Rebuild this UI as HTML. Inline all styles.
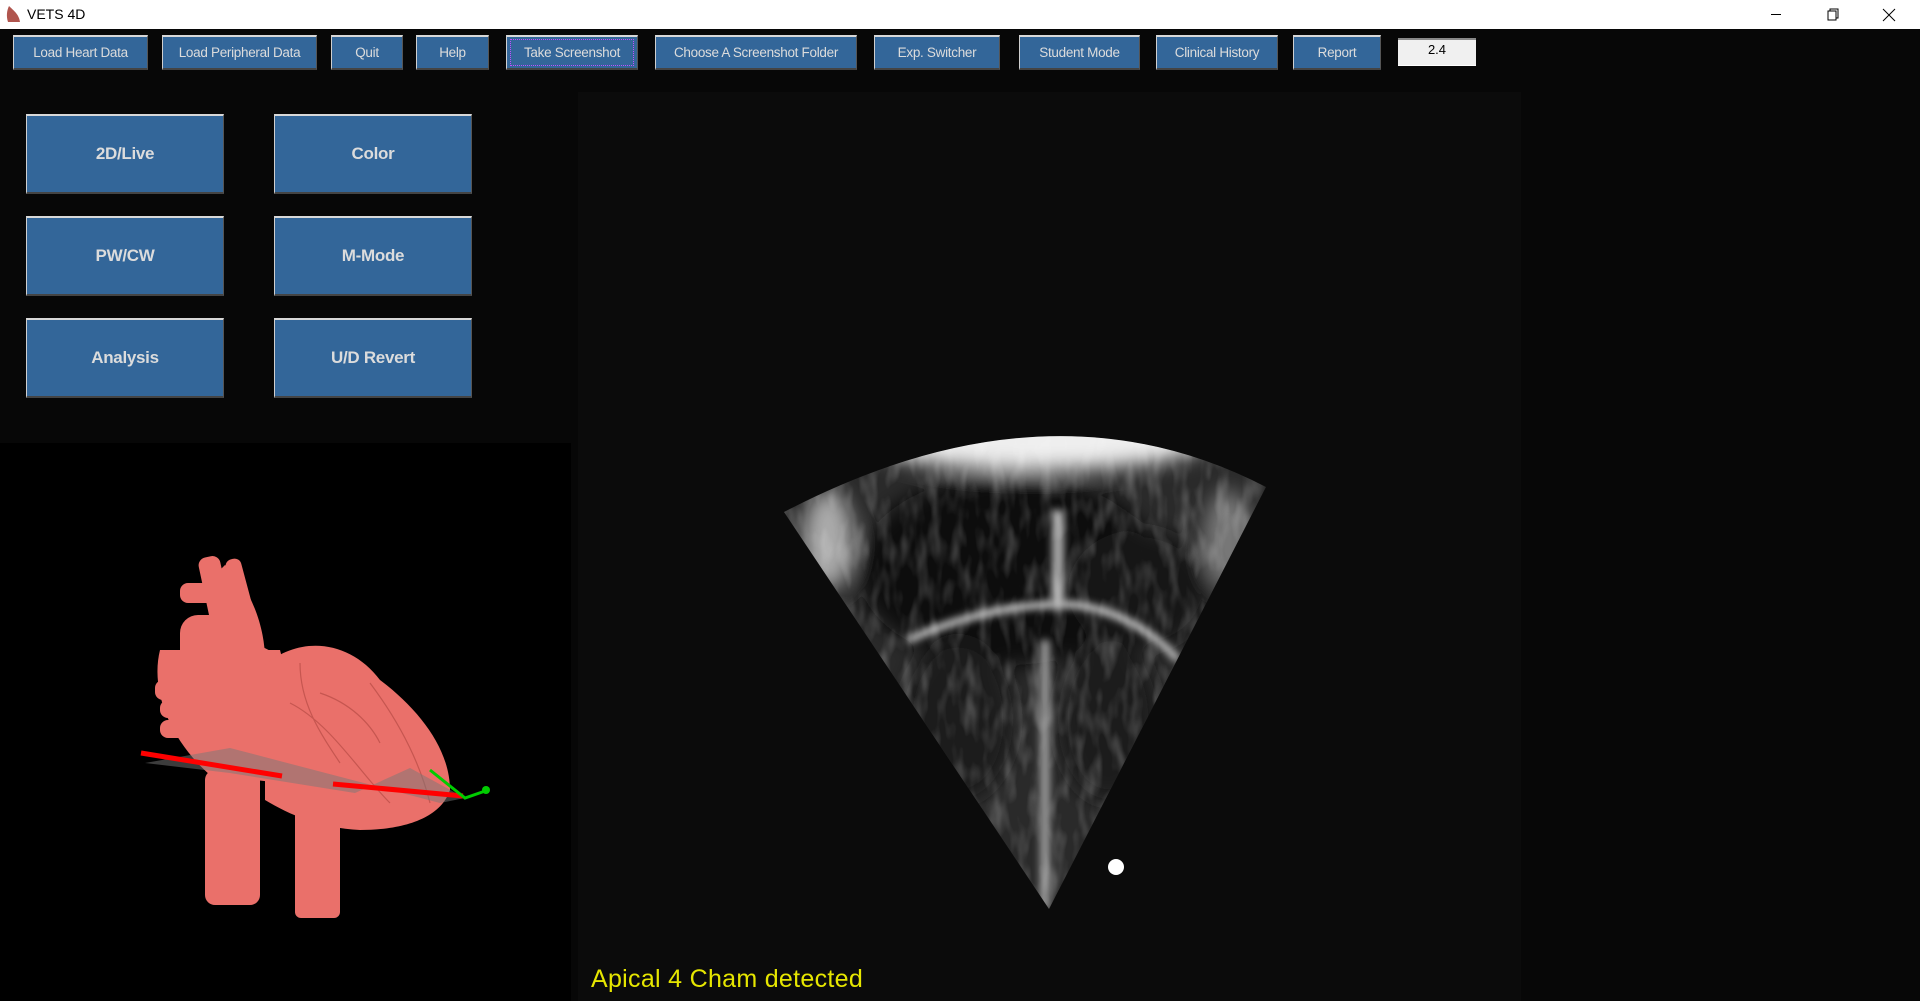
<!DOCTYPE html>
<html><head><meta charset="utf-8"><style>
*{margin:0;padding:0;box-sizing:border-box}
html,body{width:1920px;height:1001px;overflow:hidden}
body{background:#070707;position:relative;font-family:"Liberation Sans",sans-serif}
.tb{position:absolute;left:0;top:0;width:1920px;height:29px;background:#fff}
.tb span{position:absolute;left:27px;top:6px;font-size:14px;color:#000}
.b{position:absolute;background:#336699;color:#dcdcdc;border-top:2px solid #d8d8d8;border-left:1px solid #cfcfcf;border-right:1px solid #555;border-bottom:2px solid #444;display:flex;align-items:center;justify-content:center;font-size:13.5px;letter-spacing:-0.3px}
.t{top:35px;height:35px}
.g{font-size:17px;font-weight:bold;width:198px;height:80px}
</style></head><body>
<div class="tb">
<svg style="position:absolute;left:5px;top:4px" width="16" height="20"><path d="M4 2 C8 6 14 10 15 18 L3 18 C1 12 2 6 4 2Z" fill="#b0554e"/></svg>
<span>VETS 4D</span>
<svg style="position:absolute;left:1768px;top:8px" width="150" height="14" fill="none" stroke="#000" stroke-width="1"><path d="M3 6.5h10"/><path d="M60 3h8v9h-8zM62 3v-2h8v9h-2"/><path d="M115 1l12 12M127 1l-12 12"/></svg>
</div>
<div style="position:absolute;left:0;top:443px;width:571px;height:558px;background:#000"></div>
<div style="position:absolute;left:578px;top:92px;width:943px;height:909px;background:#0b0b0b"></div>

<div class="b t" style="left:13px;width:135px">Load Heart Data</div>
<div class="b t" style="left:162px;width:155px">Load Peripheral Data</div>
<div class="b t" style="left:331px;width:72px">Quit</div>
<div class="b t" style="left:416px;width:73px">Help</div>
<div class="b t" style="left:506px;width:132px;outline:1px dotted #c050ff;outline-offset:-5px">Take Screenshot</div>
<div class="b t" style="left:655px;width:202px">Choose A Screenshot Folder</div>
<div class="b t" style="left:874px;width:126px">Exp. Switcher</div>
<div class="b t" style="left:1019px;width:121px">Student Mode</div>
<div class="b t" style="left:1156px;width:122px">Clinical History</div>
<div class="b t" style="left:1293px;width:88px">Report</div>
<div style="position:absolute;left:1398px;top:38px;width:78px;height:28px;background:#f0f0f0;border-top:2px solid #888;border-bottom:1px solid #fff;font-size:13px;text-align:center;padding-top:2px;color:#000">2.4</div>

<div class="b g" style="left:26px;top:114px">2D/Live</div>
<div class="b g" style="left:274px;top:114px">Color</div>
<div class="b g" style="left:26px;top:216px">PW/CW</div>
<div class="b g" style="left:274px;top:216px">M-Mode</div>
<div class="b g" style="left:26px;top:318px">Analysis</div>
<div class="b g" style="left:274px;top:318px">U/D Revert</div>

<svg style="position:absolute;left:0;top:443px" width="571" height="558">
<g fill="#ea706a" transform="translate(0,-443)">
<rect x="205" y="556" width="22" height="70" rx="8" transform="rotate(-12 216 595)"/>
<rect x="232" y="558" width="16" height="60" rx="7" transform="rotate(-15 240 590)"/>
<rect x="180" y="583" width="55" height="20" rx="8"/>
<path d="M225 565 C245 580 265 620 265 660 L235 660 C230 620 220 600 215 575Z"/>
<path d="M160 650 C150 690 170 740 210 775 L300 785 C300 740 290 690 280 650Z"/>
<rect x="180" y="615" width="55" height="120" rx="18"/>
<path d="M180 665 C220 630 270 640 285 665 L300 760 C260 790 200 770 185 740Z"/>
<path d="M265 665 C300 635 350 640 380 680 C420 710 450 750 450 790 C440 820 400 830 360 830 C320 828 290 815 265 800Z"/>
<rect x="205" y="770" width="55" height="135" rx="10"/>
<rect x="295" y="800" width="45" height="118" rx="6"/>
<rect x="155" y="680" width="30" height="20" rx="8"/>
<rect x="160" y="700" width="30" height="18" rx="8"/>
<rect x="160" y="720" width="28" height="18" rx="8"/>
</g>
<g stroke="#c65650" stroke-width="1.2" fill="none">
<path d="M300 220 C300 260 320 290 340 320 M320 250 C350 260 370 280 380 300 M290 260 C330 280 360 330 390 360 M370 240 C400 280 420 320 430 360"/>
</g>
<path d="M145 320 L230 305 L440 360 L465 355 L410 325 L355 350 L230 330Z" fill="#777" opacity="0.5"/>
<path d="M141 310 L282 333 M333 341 L463 353" stroke="#f00" stroke-width="5"/>
<path d="M430 327 L465 355 L488 347" stroke="#0c0" stroke-width="3" fill="none"/>
<circle cx="486" cy="347" r="4" fill="#0c0"/>
</svg>

<svg style="position:absolute;left:578px;top:400px" width="943" height="540">
<defs>
<filter id="bl"><feGaussianBlur stdDeviation="10"/></filter>
<filter id="bl2"><feGaussianBlur stdDeviation="4"/></filter>
<filter id="nz"><feTurbulence type="fractalNoise" baseFrequency="0.08 0.03" numOctaves="2" seed="3"/><feColorMatrix type="matrix" values="0 0 0 0 1  0 0 0 0 1  0 0 0 0 1  0 0 0 1.4 -0.6"/></filter>
<clipPath id="fan"><path d="M206 112 Q470 -26 688 87 L471 509 Z"/></clipPath>
</defs>
<g clip-path="url(#fan)">
<rect width="943" height="540" fill="#2a2a2a"/>
<g filter="url(#bl)">
<ellipse cx="460" cy="40" rx="170" ry="30" fill="#eee"/>
<ellipse cx="430" cy="170" rx="150" ry="95" fill="#111"/>
<ellipse cx="560" cy="190" rx="70" ry="60" fill="#161616"/>
<ellipse cx="380" cy="320" rx="55" ry="80" fill="#1e1e1e"/>
<ellipse cx="530" cy="320" rx="50" ry="80" fill="#1c1c1c"/>
<ellipse cx="250" cy="140" rx="25" ry="50" fill="#aaa"/>
<ellipse cx="650" cy="140" rx="25" ry="50" fill="#777"/>
</g>
<g filter="url(#bl2)">
<path d="M330 240 Q420 200 500 205 Q560 215 600 260" stroke="#ccc" stroke-width="7" fill="none"/>
<rect x="462" y="240" width="10" height="270" fill="#999"/>
<rect x="474" y="110" width="12" height="100" fill="#aaa"/>
</g>
<rect width="943" height="540" filter="url(#nz)" opacity="0.35"/>
</g>
<circle cx="538" cy="467" r="8" fill="#fff"/>
</svg>

<div style="position:absolute;left:591px;top:964px;color:#e6e600;font-size:25px;line-height:30px;letter-spacing:0.3px">Apical 4 Cham detected</div>
</body></html>
